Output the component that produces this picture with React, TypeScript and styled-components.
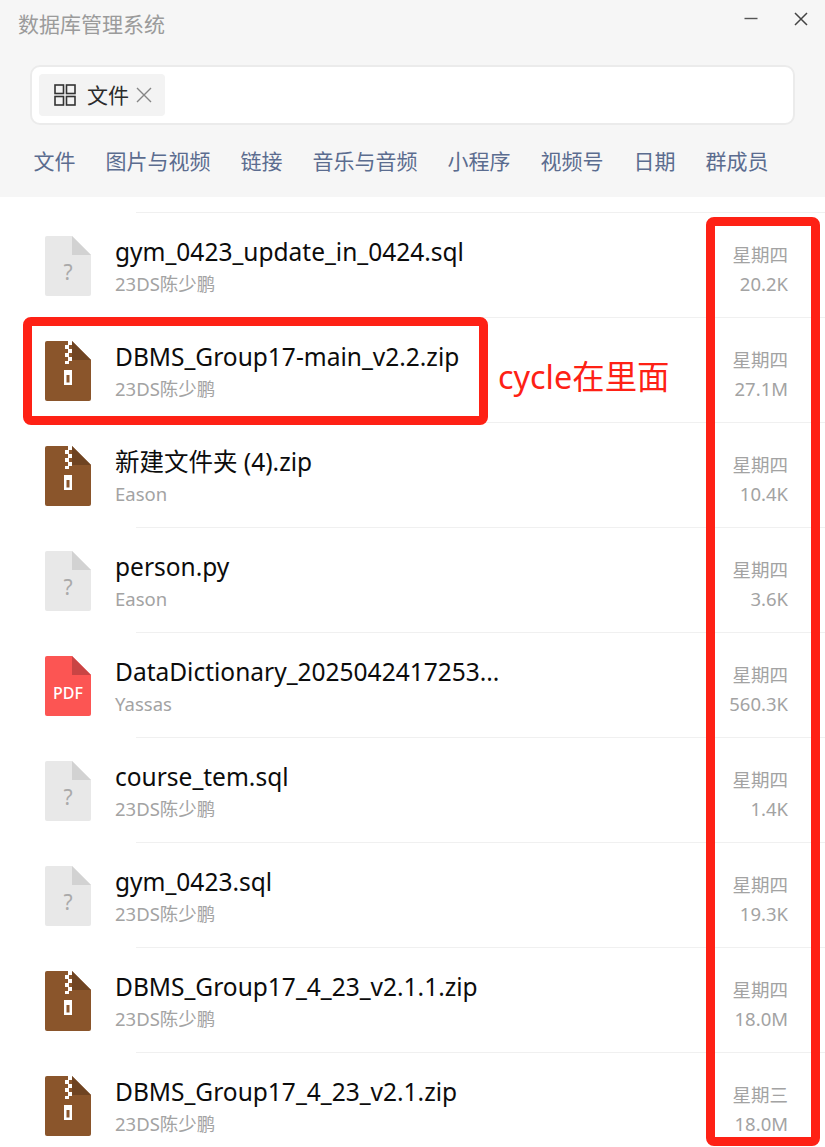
import styled, { createGlobalStyle } from "styled-components"

const files = [
  { name: "gym_0423_update_in_0424.sql", from: "23DS陈少鹏", day: "星期四", size: "20.2K", type: "unknown" },
  { name: "DBMS_Group17-main_v2.2.zip", from: "23DS陈少鹏", day: "星期四", size: "27.1M", type: "zip" },
  { name: "新建文件夹 (4).zip", from: "Eason", day: "星期四", size: "10.4K", type: "zip" },
  { name: "person.py", from: "Eason", day: "星期四", size: "3.6K", type: "unknown" },
  { name: "DataDictionary_2025042417253...", from: "Yassas", day: "星期四", size: "560.3K", type: "pdf" },
  { name: "course_tem.sql", from: "23DS陈少鹏", day: "星期四", size: "1.4K", type: "unknown" },
  { name: "gym_0423.sql", from: "23DS陈少鹏", day: "星期四", size: "19.3K", type: "unknown" },
  { name: "DBMS_Group17_4_23_v2.1.1.zip", from: "23DS陈少鹏", day: "星期四", size: "18.0M", type: "zip" },
  { name: "DBMS_Group17_4_23_v2.1.zip", from: "23DS陈少鹏", day: "星期三", size: "18.0M", type: "zip" },
]

const tabs = ["文件", "图片与视频", "链接", "音乐与音频", "小程序", "视频号", "日期", "群成员"]

const FileIcon = ({ type }: { type: string }) => {
  const body = type === "zip" ? "#8a552b" : type === "pdf" ? "#fc5553" : "#e8e8e8"
  const fold = type === "zip" ? "#6f4422" : type === "pdf" ? "#c94444" : "#d2d2d2"
  return (
    <svg width="46" height="60" viewBox="0 0 46 60">
      <path
        d="M2 0H27L46 19V58a2 2 0 0 1-2 2H2a2 2 0 0 1-2-2V2a2 2 0 0 1 2-2z"
        fill={body}
      />
      <path d="M27 0L46 19H27z" fill={fold} />
      {type === "unknown" && (
        <text x="23" y="44" textAnchor="middle" fontSize="21" fill="#aaa" fontFamily="'Noto Sans', sans-serif">
          ?
        </text>
      )}
      {type === "pdf" && (
        <text x="23" y="43" textAnchor="middle" fontSize="16" fontWeight="500" fill="#fff" fontFamily="'Noto Sans', sans-serif">
          PDF
        </text>
      )}
      {type === "zip" && (
        <g fill="#fff">
          <path d="M23 0h4v4h-4zM20 4h4v4h-4zM23 8h4v4h-4zM20 12h4v4h-4zM23 16h4v4h-4zM20 20h4v3h-4z" />
          <path d="M19 29h8v15h-8z" />
          <path d="M21.5 34h3v7.5h-3z" fill="#8a552b" />
        </g>
      )}
    </svg>
  )
}

const App = () => {
  return (
    <Page>
      <GlobalStyle />
      <Header>
        <TitleBar>
          <Title>数据库管理系统</Title>
          <WindowButtons>
            <svg width="14" height="14" viewBox="0 0 14 14">
              <path d="M0.5 6.5h13" stroke="#555" strokeWidth="1.4" />
            </svg>
            <svg width="14" height="14" viewBox="0 0 14 14">
              <path d="M1 1l12 12M13 1L1 13" stroke="#444" strokeWidth="1.5" />
            </svg>
          </WindowButtons>
        </TitleBar>
        <SearchBox>
          <Chip>
            <svg width="22" height="22" viewBox="0 0 22 22" fill="none" stroke="#333" strokeWidth="1.6">
              <rect x="1" y="1" width="8.5" height="8.5" />
              <rect x="12.5" y="1" width="8.5" height="8.5" />
              <rect x="1" y="12.5" width="8.5" height="8.5" />
              <rect x="12.5" y="12.5" width="8.5" height="8.5" />
            </svg>
            <ChipText>文件</ChipText>
            <svg width="16" height="16" viewBox="0 0 16 16">
              <path d="M1 1l14 14M15 1L1 15" stroke="#858585" strokeWidth="1.4" />
            </svg>
          </Chip>
        </SearchBox>
        <Tabs>
          {tabs.map((tab) => (
            <Tab key={tab}>{tab}</Tab>
          ))}
        </Tabs>
      </Header>
      <List>
        <TopSpacer />
        {files.map((file) => (
          <Row key={file.name}>
            <FileIcon type={file.type} />
            <Info>
              <FileName>{file.name}</FileName>
              <Sender>{file.from}</Sender>
            </Info>
            <Meta>
              <span>{file.day}</span>
              <span>{file.size}</span>
            </Meta>
          </Row>
        ))}
      </List>
      <RedBox $kind="file" />
      <RedBox $kind="column" />
      <Note>cycle在里面</Note>
    </Page>
  )
}

const GlobalStyle = createGlobalStyle`
  html, body {
    margin: 0;
    padding: 0;
    background: #fff;
  }
`

const Page = styled.div`
  position: relative;
  width: 825px;
  height: 1147px;
  overflow: hidden;
  background: #fff;
  font-family: "Noto Sans", "Noto Sans CJK SC", sans-serif;
`

const Header = styled.div`
  height: 197px;
  box-sizing: border-box;
  background: #f6f6f6;
  padding: 0 15px 0 30px;
`

const TitleBar = styled.div`
  display: flex;
  justify-content: space-between;
  height: 65px;
  margin-left: -12px;
`

const Title = styled.div`
  margin-top: 7px;
  font-size: 21px;
  line-height: 34px;
  color: #9b9b9b;
`

const WindowButtons = styled.div`
  display: flex;
  gap: 36px;
  padding: 12px 2px 0 0;
  align-items: flex-start;
`

const SearchBox = styled.div`
  width: 765px;
  height: 60px;
  box-sizing: border-box;
  padding: 7px;
  background: #fff;
  border: 2px solid #ebebeb;
  border-radius: 10px;
`

const Chip = styled.div`
  display: inline-flex;
  align-items: center;
  height: 42px;
  box-sizing: border-box;
  padding: 0 13px 0 15px;
  background: #f3f3f3;
  border-radius: 4px;
`

const ChipText = styled.span`
  margin: 0 7px 2px 11px;
  font-size: 21px;
  color: #2b2b2b;
`

const Tabs = styled.div`
  display: flex;
  gap: 30px;
  margin: 20px 0 0 3.5px;
`

const Tab = styled.div`
  font-size: 21px;
  line-height: 32px;
  color: #5b6c8f;
`

const List = styled.div`
  height: 950px;
  overflow: hidden;
`

const TopSpacer = styled.div`
  height: 15px;
  margin-left: 136px;
  border-bottom: 1px solid #f0f0f0;
`

const Row = styled.div`
  position: relative;
  display: flex;
  align-items: center;
  height: 105px;
  box-sizing: border-box;
  padding: 1px 37px 0 45px;

  &::after {
    content: "";
    position: absolute;
    left: 136px;
    right: 0;
    bottom: 0;
    border-bottom: 1px solid #f0f0f0;
  }
`

const Info = styled.div`
  display: flex;
  flex: 1;
  flex-direction: column;
  margin-left: 24px;
`

const FileName = styled.div`
  font-size: 24.5px;
  line-height: 33px;
  color: #0c0c0c;
`

const Sender = styled.div`
  margin-top: 2px;
  font-size: 18.5px;
  line-height: 28px;
  color: #a3a3a3;
`

const Meta = styled.div`
  display: flex;
  flex-direction: column;
  align-items: flex-end;
  gap: 3px;
  margin-top: 7px;
  font-size: 18.5px;
  line-height: 26px;
  color: #a3a3a3;
`

const RedBox = styled.div<{ $kind: "file" | "column" }>`
  position: absolute;
  box-sizing: border-box;
  border: 9px solid #fe2115;
  border-radius: 8px;
  left: ${(p) => (p.$kind === "file" ? "23px" : "706px")};
  top: ${(p) => (p.$kind === "file" ? "317px" : "217px")};
  width: ${(p) => (p.$kind === "file" ? "465px" : "114px")};
  height: ${(p) => (p.$kind === "file" ? "108px" : "929px")};
`

const Note = styled.div`
  position: absolute;
  left: 498px;
  top: 353px;
  font-size: 32.4px;
  line-height: 46px;
  color: #fe2115;
  white-space: nowrap;
`

export default App
